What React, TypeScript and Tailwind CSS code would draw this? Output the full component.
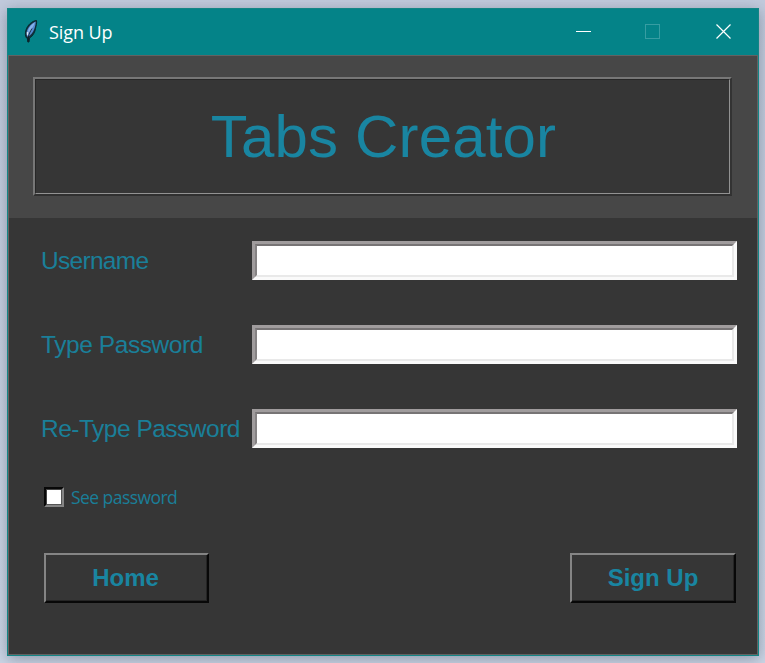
const sans = "font-['Liberation_Sans',Arial,sans-serif]";
const ui = "font-['Open_Sans','Noto_Sans',sans-serif]";

function Feather() {
  return (
    <svg width="18" height="26" viewBox="0 0 18 26" className="shrink-0">
      <path d="M14.500 1.500C10 2 5.500 6 4 11c-1 3-.8 6 .5 8l1 .2.300 3.800h1.200l.5-4C11 17 13 13 13.500 9.500 14 7 15 4 14.500 1.500Z" fill="#14323f" stroke="#08282e" strokeWidth="1" />
      <path d="M13.800 2.500C9.500 4.200 5.500 8.500 4.700 13c-.3 2 0 3.500.6 4.700C9.500 17 13.500 10 13.800 2.500Z" fill="#5589cf" />
      <path d="M12.800 3.300C9.500 5.500 7.300 8 6 11.500l1.200 2C9.500 10.500 12 7 12.800 3.300Z" fill="#86b3ea" />
      <path d="M10 9.500C8.500 12 7 14.500 6.300 18l-.1 4.500" fill="none" stroke="#101820" strokeWidth=".8" />
      <path d="M4.800 13.200l1.700-.7-.5 3.500-1 .5Z" fill="#dce9f6" />
    </svg>
  );
}

function Entry({ label, fit }: { label: string; fit: string }) {
  return (
    <div className="flex h-[39px] items-center">
      <label className={`${sans} ${fit} w-[211px] shrink-0 whitespace-nowrap text-[24.5px] leading-[38px] text-[#1a7f99]`}>{label}</label>
      <div className="h-[39px] w-[485px] shrink-0 border-[3px] border-t-[#a09c9d] border-r-[#fafafa] border-b-[#fafafa] border-l-[#a09c9d]">
        <div className="h-full border-2 border-t-[#777475] border-r-[#e9e9e9] border-b-[#e9e9e9] border-l-[#858283] bg-white" />
      </div>
    </div>
  );
}

function Button({ text, size }: { text: string; size: string }) {
  return (
    <button className={`${sans} ${size} flex h-[50px] items-center justify-center border-2 border-t-[#858585] border-r-[#080808] border-b-[#080808] border-l-[#858585] bg-[#363636] text-2xl font-bold text-[#1985a1] shadow-[inset_-1px_-1px_0_#252525]`}>
      {text}
    </button>
  );
}

export default function App() {
  return (
    <div className="h-[663px] w-[765px] overflow-hidden bg-linear-to-b from-[#c2cbdd] to-[#ccd6e6] pl-[7px] pt-2">
      <div className="flex h-[648px] w-[752px] flex-col border border-[#138585] bg-[#363636] shadow-[0_3px_14px_#3c465870]">
        <header className="flex h-[46px] shrink-0 items-center bg-[#048388] pl-[14px]">
          <Feather />
          <span className={`${ui} ml-[9px] text-[18px] leading-6 tracking-[-0.1px] text-white`}>Sign Up</span>
          <svg width="160" height="18" viewBox="0 0 160 18" className="ml-auto mr-[22px]" fill="none">
            <path d="M0 8.500h15" stroke="white" />
            <rect x="69.500" y="1.500" width="14" height="14" stroke="#379da2" />
            <path d="M140.500 1.500l14 14M154.500 1.500l-14 14" stroke="white" strokeWidth="1.200" />
          </svg>
        </header>
        <main className="min-h-0 flex-1 border border-[#626262]">
          <section className="h-[162px] bg-[#474747] pl-6 pt-[21px]">
            <div className="h-[119px] w-[699px] border-2 border-t-[#777777] border-r-[#333333] border-b-[#303030] border-l-[#777777]">
              <div className="flex h-full items-center justify-center border border-t-[#272727] border-r-[#929292] border-b-[#929292] border-l-[#272727] bg-[#363636] pl-[2px]">
                <h1 className={`${sans} text-[60px] leading-none tracking-[0.15px] text-[#1985a1]`}>Tabs Creator</h1>
              </div>
            </div>
          </section>
          <form className="pl-[31px] pr-[20px] pt-[23px]">
            <div className="flex flex-col gap-[45px] pl-px">
              <Entry label="Username" fit="tracking-[-0.7px]" />
              <Entry label="Type Password" fit="tracking-[-0.43px]" />
              <Entry label="Re-Type Password" fit="tracking-[-0.5px]" />
            </div>
            <div className="mt-[39px] flex h-5 items-center pl-1">
              <div className="size-5 border-2 border-t-[#080808] border-r-[#858585] border-b-[#858585] border-l-[#080808]">
                <div className="size-full border border-t-[#444444] border-r-[#555555] border-b-[#555555] border-l-[#444444] bg-white" />
              </div>
              <span className={`${ui} ml-[7px] text-[17.5px] leading-5 tracking-[-0.55px] text-[#1a7f99]`}>See password</span>
            </div>
            <div className="mt-[46px] flex justify-between pl-1 pr-px">
              <Button text="Home" size="w-[165px] pr-[2px]" />
              <Button text="Sign Up" size="w-[166px]" />
            </div>
          </form>
        </main>
      </div>
    </div>
  );
}
